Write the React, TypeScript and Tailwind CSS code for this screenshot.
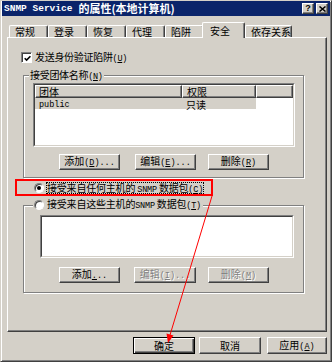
import React from "react";

type P = { children?: React.ReactNode; className?: string };

const M = ({ children, className = "" }: P) => (
  <span className={"font-['Liberation_Mono',monospace] text-[8.5px] " + className}>{children}</span>
);

const Btn = ({ children, className = "", disabled = false }: P & { disabled?: boolean }) => (
  <div
    className={
      "h-[16px] flex items-center justify-center border border-t-white border-l-white border-r-[#404040] border-b-[#404040] shadow-[inset_-1px_-1px_0_#808080] leading-none " +
      (disabled ? "text-[#808080] [text-shadow:1px_1px_0_#fff] " : "") +
      className
    }
  >
    <span>{children}</span>
  </div>
);

const Sunken = ({ children, className = "" }: P) => (
  <div className={"border border-t-[#808080] border-l-[#808080] border-r-white border-b-white " + className}>
    <div className="h-full border border-t-[#404040] border-l-[#404040] border-r-[#d4d0c8] border-b-[#d4d0c8] bg-white overflow-hidden">
      {children}
    </div>
  </div>
);

const Radio = ({ on }: { on?: boolean }) => (
  <div className="w-[10px] h-[10px] shrink-0 rounded-full border border-t-[#808080] border-l-[#808080] border-r-white border-b-white bg-white shadow-[inset_1px_1px_0_#404040] flex items-center justify-center">
    {on && <div className="w-[4px] h-[4px] rounded-full bg-black" />}
  </div>
);

const tabBase =
  "h-[12px] flex items-center pl-[5px] border-t border-l border-r border-t-white border-l-white border-r-[#404040] rounded-t-[2px] shadow-[inset_-1px_0_0_#808080] whitespace-nowrap";

const hdr =
  "h-full border border-t-white border-l-white border-r-[#404040] border-b-[#404040] shadow-[inset_-1px_-1px_0_#808080] bg-[#d4d0c8] flex items-center pb-[1px] leading-[9px]";

export default function App() {
  return (
    <div className="relative w-[332px] h-[362px] bg-[#d4d0c8] border border-t-[#d4d0c8] border-l-[#d4d0c8] border-r-[#404040] border-b-[#404040] shadow-[inset_1px_1px_0_#fff,inset_-1px_-1px_0_#808080] flex flex-col font-['Noto_Sans_CJK_SC',sans-serif] text-[10px] leading-[12px] text-black overflow-hidden">
      {/* Title bar */}
      <div className="mx-[1px] h-[15px] shrink-0 bg-[#0a246a] flex items-center pl-[2px] pr-[2px] text-white font-bold">
        <span className="font-['Liberation_Mono',monospace] text-[9.5px] leading-none">SNMP Service</span>
        <span className="ml-[6px] text-[11px] leading-none">的属性(本地计算机)</span>
        <div className="ml-auto flex gap-[2px]">
          <div className="w-[12px] h-[11px] bg-[#d4d0c8] border border-t-white border-l-white border-r-[#404040] border-b-[#404040] shadow-[inset_-1px_-1px_0_#808080] flex items-center justify-center text-black text-[9px] font-bold leading-none font-['Liberation_Sans',sans-serif]">
            ?
          </div>
          <div className="w-[12px] h-[11px] bg-[#d4d0c8] border border-t-white border-l-white border-r-[#404040] border-b-[#404040] shadow-[inset_-1px_-1px_0_#808080] flex items-center justify-center">
            <svg width="7" height="6" viewBox="0 0 7 6">
              <path d="M0.5 0.5 L6.5 5.5 M6.5 0.5 L0.5 5.5" stroke="black" strokeWidth="1.5" fill="none" />
            </svg>
          </div>
        </div>
      </div>

      {/* Tabs + panel */}
      <div className="pl-[6px] flex flex-col">
        <div className="mt-[6px] h-[15px] ml-[2px] flex items-end">
          <div className={tabBase + " w-[39px]"}>常规</div>
          <div className={tabBase + " w-[39px]"}>登录</div>
          <div className={tabBase + " w-[39px]"}>恢复</div>
          <div className={tabBase + " w-[39px]"}>代理</div>
          <div className={tabBase + " w-[39px]"}>陷阱</div>
          <div className="relative z-10 -ml-[2px] w-[43px] h-[16px] -mb-[1px] bg-[#d4d0c8] flex items-center pl-[7px] border-t border-l border-r border-t-white border-l-white border-r-[#404040] rounded-t-[2px] shadow-[inset_-1px_0_0_#808080]">
            安全
          </div>
          <div className={tabBase + " w-[47px] pl-[3px]"}>依存关系</div>
        </div>

        <div className="w-[320px] h-[295px] border border-t-white border-l-white border-r-[#404040] border-b-[#404040] shadow-[inset_-1px_-1px_0_#808080] flex flex-col items-start">
          {/* checkbox */}
          <div className="mt-[14px] ml-[13px] flex items-center gap-[3px] h-[11px]">
            <div className="w-[11px] h-[11px] shrink-0 border border-t-[#808080] border-l-[#808080] border-r-white border-b-white bg-white shadow-[inset_1px_1px_0_#404040] flex items-center justify-center">
              <svg width="7" height="7" viewBox="0 0 7 7" className="ml-[1px] mt-[1px]">
                <path d="M0.7 3.2 L2.6 5.1 L6.4 1.2" stroke="black" strokeWidth="1.6" fill="none" />
              </svg>
            </div>
            <span className="leading-[11px] tracking-[-0.3px]">
              发送身份验证陷阱<M>(<u>U</u>)</M>
            </span>
          </div>

          {/* group 1 */}
          <div className="mt-[12px] ml-[15px] w-[281px] border border-[#808080] shadow-[inset_1px_1px_0_#fff,1px_1px_0_#fff] flex flex-col pb-[7px]">
            <div className="-mt-[7px] ml-[5px] self-start bg-[#d4d0c8] px-[1px] h-[12px] leading-[12px] tracking-[-0.3px]">
              接受团体名称<M>(<u>N</u>)</M>
            </div>
            <Sunken className="mt-[2px] ml-[9px] w-[262px] h-[64px]">
              <div className="flex h-[13px]">
                <div className={hdr + " w-[147px] pl-[3px]"}>团体</div>
                <div className={hdr + " w-[74px] pl-[4px]"}>权限</div>
                <div className={hdr + " flex-1"} />
              </div>
              <div className="flex h-[11px] w-[221px] bg-[#d4d0c8] items-center pt-[1px] leading-[9px]">
                <div className="w-[147px] pl-[4px]">
                  <M>public</M>
                </div>
                <div className="pl-[4px]">只读</div>
              </div>
            </Sunken>
            <div className="mt-[7px] ml-[35px] flex">
              <Btn className="w-[61px]">
                添加<M>(<u>D</u>)...</M>
              </Btn>
              <Btn className="ml-[15px] w-[61px]">
                编辑<M>(<u>E</u>)...</M>
              </Btn>
              <Btn className="ml-[12px] w-[61px]">
                删除<M>(<u>R</u>)</M>
              </Btn>
            </div>
          </div>

          {/* red highlight */}
          <div className="mt-[1px] ml-[7px] w-[198px] shrink-0 h-[17px] border-2 border-[#ff0000] flex items-center pl-[17px]">
            <Radio on />
            <div className="ml-[2px] h-[12px] border border-dotted border-black leading-[10px] whitespace-nowrap tracking-[-0.2px]">
              <span>
                接受来自任何主机的 <M>SNMP</M> 数据包<M>(<u>C</u>)</M>
              </span>
            </div>
          </div>

          {/* group 2 */}
          <div className="mt-[9px] ml-[15px] w-[281px] border border-[#808080] shadow-[inset_1px_1px_0_#fff,1px_1px_0_#fff] flex flex-col pb-[9px]">
            <div className="-mt-[7px] ml-[9px] self-start bg-[#d4d0c8] pl-[1px] pr-[2px] h-[12px] flex items-center gap-[3px] leading-none whitespace-nowrap">
              <Radio />
              <span className="tracking-[-0.2px]">
                接受来自这些主机的<M>SNMP</M> 数据包<M>(<u>T</u>)</M>
              </span>
            </div>
            <Sunken className="mt-[4px] ml-[16px] w-[254px] h-[43px]" />
            <div className="mt-[9px] ml-[35px] flex">
              <Btn className="w-[61px]">
                添加<M>
                  <u>.</u>..
                </M>
              </Btn>
              <Btn disabled className="ml-[14px] w-[62px]">
                编辑<M>(<u>I</u>)...</M>
              </Btn>
              <Btn disabled className="ml-[12px] w-[61px]">
                删除<M>(<u>M</u>)</M>
              </Btn>
            </div>
          </div>
        </div>
      </div>

      {/* bottom buttons */}
      <div className="mt-[5px] pl-[132px] flex">
        <div className="w-[62px] h-[17px] border border-black shadow-[inset_1px_1px_0_#fff,inset_-1px_-1px_0_#404040,inset_-2px_-2px_0_#808080] flex items-center justify-center leading-none">
          确定
        </div>
        <Btn className="ml-[4px] w-[62px] h-[17px]">取消</Btn>
        <Btn className="ml-[6px] w-[60px] h-[17px]">
          应用<M>(<u>A</u>)</M>
        </Btn>
      </div>

      {/* red arrow overlay */}
      <svg className="absolute left-0 top-0 pointer-events-none" width="332" height="362" viewBox="0 0 332 362">
        <line x1="211" y1="195" x2="169" y2="334" stroke="#ff0000" strokeWidth="1" />
        <polygon points="167,342 165.5,332.5 172.5,334.5" fill="#ff0000" />
      </svg>
    </div>
  );
}
